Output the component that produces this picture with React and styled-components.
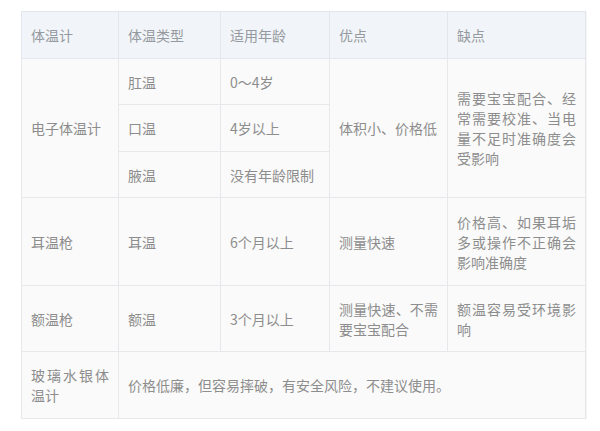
import React from "react";
import styled, { createGlobalStyle } from "styled-components";

const Global = createGlobalStyle`
  html, body { margin: 0; padding: 0; background: #ffffff; }
  body { font-family: "Noto Sans CJK SC", "Noto Sans", sans-serif; }
`;

const Page = styled.div`
  padding: 11px 0 0 21px;
`;

const Table = styled.table`
  border-collapse: collapse;
  table-layout: fixed;
  width: 565px;
  font-size: 14px;
  line-height: 20px;
  color: #8d8d8d;
  background: #fafafa;
  box-shadow: 1px 1px 0 #f4f4f4;
`;

const Col = styled.col`
  width: ${(p) => p.$w}px;
`;

const Th = styled.th`
  height: 46px;
  padding: 0 9px;
  background: #f1f4f8;
  border: 1px solid #e3e7ec;
  font-weight: normal;
  text-align: left;
  color: #959aa1;
  vertical-align: middle;
`;

const Td = styled.td`
  height: ${(p) => p.$h}px;
  padding: 0 9px;
  border: 1px solid #e6e8eb;
  text-align: justify;
  vertical-align: middle;
  word-break: break-all;
`;

export default function App() {
  return (
    <>
      <Global />
      <Page>
        <Table>
          <colgroup>
            <Col $w={97} />
            <Col $w={102} />
            <Col $w={109} />
            <Col $w={118} />
            <Col $w={138} />
          </colgroup>
          <thead>
            <tr>
              <Th>体温计</Th>
              <Th>体温类型</Th>
              <Th>适用年龄</Th>
              <Th>优点</Th>
              <Th>缺点</Th>
            </tr>
          </thead>
          <tbody>
            <tr>
              <Td rowSpan={3}>电子体温计</Td>
              <Td $h={45}>肛温</Td>
              <Td $h={45}>0～4岁</Td>
              <Td rowSpan={3}>体积小、价格低</Td>
              <Td rowSpan={3}>需要宝宝配合、经常需要校准、当电量不足时准确度会受影响</Td>
            </tr>
            <tr>
              <Td $h={46}>口温</Td>
              <Td $h={46}>4岁以上</Td>
            </tr>
            <tr>
              <Td $h={45}>腋温</Td>
              <Td $h={45}>没有年龄限制</Td>
            </tr>
            <tr>
              <Td $h={87}>耳温枪</Td>
              <Td>耳温</Td>
              <Td>6个月以上</Td>
              <Td>测量快速</Td>
              <Td>价格高、如果耳垢多或操作不正确会影响准确度</Td>
            </tr>
            <tr>
              <Td $h={65}>额温枪</Td>
              <Td>额温</Td>
              <Td>3个月以上</Td>
              <Td>测量快速、不需要宝宝配合</Td>
              <Td>额温容易受环境影响</Td>
            </tr>
            <tr>
              <Td $h={66}>玻璃水银体温计</Td>
              <Td colSpan={4}>价格低廉，但容易摔破，有安全风险，不建议使用。</Td>
            </tr>
          </tbody>
        </Table>
      </Page>
    </>
  );
}
